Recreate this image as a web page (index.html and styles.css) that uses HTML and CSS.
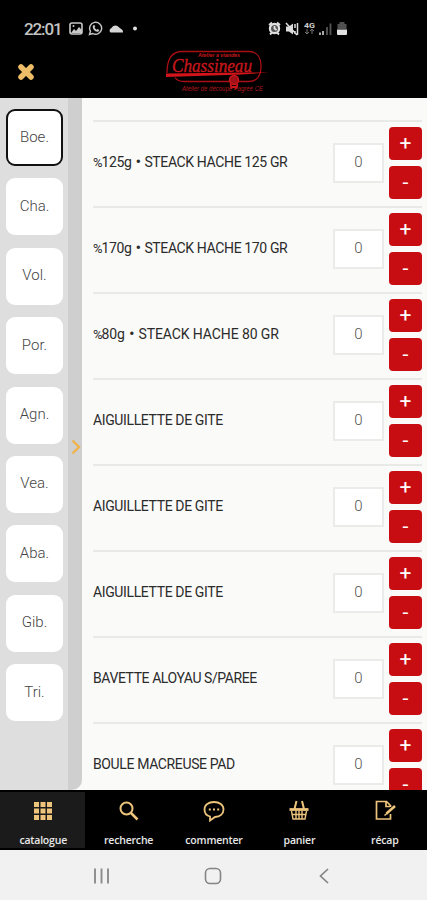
FILE: index.html
```html
<!DOCTYPE html>
<html lang="fr">
  <head>
    <meta charset="UTF-8" />
    <meta name="viewport" content="width=device-width, initial-scale=1.0" />
    <title>Catalogue</title>
    <link rel="stylesheet" href="styles.css">
  </head>
  <body>
    <div class="app">
      <!-- Status bar -->
      <div class="status">
        <span class="time">22:01</span>
        <svg class="status-left" width="72" height="16" viewBox="0 0 72 16">
          <rect x="1" y="2" width="12" height="11" rx="2" fill="none" stroke="#c8c8c8" stroke-width="1.6"/>
          <path d="M2 12l3-4 2 2 3-4 3 3v3z" fill="#c8c8c8"/>
          <circle cx="4.5" cy="5" r="1" fill="#c8c8c8"/>
          <path d="M20.5 13.5l1-3.2a6 6 0 1 1 2.3 2.2z" fill="none" stroke="#c8c8c8" stroke-width="1.4"/>
          <path d="M24 4.500c-1.200 3.500 2.500 7 5.500 6l.8-1.600-1.800-1-1 .8-2-2 .8-1-1-1.800z" fill="#c8c8c8"/>
          <path d="M41.500 11.500a2.600 2.600 0 0 1 1-4.500 4.500 4.500 0 0 1 7.500-.8c1 1.500 4.500 1.800 4 5.300z" fill="#d6d6d6"/>
          <circle cx="66" cy="7.500" r="2" fill="#e0e0e0"/>
        </svg>
        <svg class="status-right" width="80" height="16" viewBox="0 0 80 16">
          <circle cx="6.500" cy="7.500" r="4.600" fill="#555" stroke="#e0e0e0" stroke-width="2.200"/>
          <path d="M1 4l3-2.500M12 4L9 1.500M2 13.500l2-2M11 13.500l-2-2M6.500 5v2.500l2 1.500" fill="none" stroke="#e0e0e0" stroke-width="1.800"/>
          <path d="M18 5.500h3l4-3v11l-4-3h-3z" fill="#dcdcdc"/>
          <path d="M18 2l11 12M27 3v4M29.500 2v12M27 10v3" fill="none" stroke="#dcdcdc" stroke-width="1.500"/>
          <text class="network" x="36" y="7" textLength="11" lengthAdjust="spacingAndGlyphs">4G</text>
          <path d="M39 8v5m-2-2l2 2 2-2M44 13V8m-2 2l2-2 2 2" fill="none" stroke="#777" stroke-width="1"/>
          <path d="M52 14v-2.500M55 14v-4" stroke="#bbb" stroke-width="1.800"/>
          <path d="M59 14V6M62.500 14V2.500" stroke="#555" stroke-width="1.800"/>
          <path d="M71.500 1h5v2h2v5h-9V3h2z" fill="#505050"/>
          <path d="M69 8.500h10V13a1 1 0 0 1-1 1h-8a1 1 0 0 1-1-1z" fill="#e2e2e2"/>
        </svg>
      </div>

      <!-- Header -->
      <header>
        <svg class="close" width="18" height="18" viewBox="0 0 18 18">
          <path d="M4 4l10 10M14 4L4 14" stroke="#edbd68" stroke-width="5.500" stroke-linecap="round"/>
        </svg>
        <svg class="logo" width="120" height="48" viewBox="0 0 120 48">
          <path d="M3 24C3 10 8 2.500 18 2.500h67c8 0 12 6 12 15s-4 15-12 15H20c-4 0-7-1-9-4" fill="none" stroke="#a80f14" stroke-width="1.300"/>
          <text class="logo-top" x="34" y="8" textLength="42" lengthAdjust="spacingAndGlyphs">Atelier a viandes</text>
          <text class="logo-name" x="8" y="23" textLength="80" lengthAdjust="spacingAndGlyphs">Chassineau</text>
          <path d="M2 24.500l77-1h26l-27 2-76 2.500z" fill="#d4141a"/>
          <circle cx="70" cy="31" r="4.500" fill="#a01217" stroke="#cc171c" stroke-width="1.500"/>
          <path d="M66.500 35l1 5M73.500 35l-1 5M67 38h6" fill="none" stroke="#cc171c" stroke-width="1.800"/>
          <text class="logo-sub" x="18" y="41.500" textLength="81" lengthAdjust="spacingAndGlyphs">Atelier de découpe • agréé CE</text>
        </svg>
      </header>

      <main>
        <!-- Families -->
        <aside>
          <div class="families">
            <div class="family selected">Boe.</div>
            <div class="family">Cha.</div>
            <div class="family">Vol.</div>
            <div class="family">Por.</div>
            <div class="family">Agn.</div>
            <div class="family">Vea.</div>
            <div class="family">Aba.</div>
            <div class="family">Gib.</div>
            <div class="family">Tri.</div>
          </div>
          <div class="handle">
            <svg width="10" height="16" viewBox="0 0 10 16">
              <path d="M1.500 1.500L8 8l-6.500 6.500" fill="none" stroke="#f0b34c" stroke-width="2.400"/>
            </svg>
          </div>
        </aside>

        <!-- Products -->
        <div class="products">
          <div class="product">
            <div class="name"><span class="percent">%</span>125g <b>•</b> STEACK HACHE 125 GR</div>
            <div class="qty">0</div>
            <div class="buttons"><button>+</button><button>-</button></div>
          </div>
          <div class="product">
            <div class="name"><span class="percent">%</span>170g <b>•</b> STEACK HACHE 170 GR</div>
            <div class="qty">0</div>
            <div class="buttons"><button>+</button><button>-</button></div>
          </div>
          <div class="product">
            <div class="name wide"><span class="percent">%</span>80g <b>•</b> STEACK HACHE 80 GR</div>
            <div class="qty">0</div>
            <div class="buttons"><button>+</button><button>-</button></div>
          </div>
          <div class="product">
            <div class="name">AIGUILLETTE DE GITE</div>
            <div class="qty">0</div>
            <div class="buttons"><button>+</button><button>-</button></div>
          </div>
          <div class="product">
            <div class="name">AIGUILLETTE DE GITE</div>
            <div class="qty">0</div>
            <div class="buttons"><button>+</button><button>-</button></div>
          </div>
          <div class="product">
            <div class="name">AIGUILLETTE DE GITE</div>
            <div class="qty">0</div>
            <div class="buttons"><button>+</button><button>-</button></div>
          </div>
          <div class="product">
            <div class="name tight">BAVETTE ALOYAU S/PAREE</div>
            <div class="qty">0</div>
            <div class="buttons"><button>+</button><button>-</button></div>
          </div>
          <div class="product">
            <div class="name">BOULE MACREUSE PAD</div>
            <div class="qty">0</div>
            <div class="buttons"><button>+</button><button>-</button></div>
          </div>
        </div>
      </main>

      <!-- Tabs -->
      <nav class="tabs">
        <div class="tab active">
          <svg width="24" height="24" viewBox="0 0 24 24" fill="#edc47c">
            <path d="M3 3h5v5H3zM9.500 3h5v5h-5zM16 3h5v5h-5zM3 9.500h5v5H3zM9.500 9.500h5v5h-5zM16 9.500h5v5h-5zM3 16h5v5H3zM9.500 16h5v5h-5zM16 16h5v5h-5z"/>
          </svg>
          <span>catalogue</span>
        </div>
        <div class="tab">
          <svg width="24" height="24" viewBox="0 0 24 24" fill="none" stroke="#edc47c" stroke-width="2">
            <circle cx="9.500" cy="9.500" r="6"/>
            <path d="M14 14l6.500 6.500" stroke-width="2.500"/>
          </svg>
          <span>recherche</span>
        </div>
        <div class="tab">
          <svg width="24" height="24" viewBox="0 0 24 24" fill="none" stroke="#edc47c" stroke-width="1.800">
            <path d="M8 17.500C4 16.500 2.500 13.500 2.500 10.500 2.500 6 6.500 3 12 3s9.500 3 9.500 7.500S18 17.800 13 18l-5 3.500z"/>
            <path d="M6.800 10.500h2M11 10.500h2M15.200 10.500h2" stroke-width="2.200"/>
          </svg>
          <span>commenter</span>
        </div>
        <div class="tab">
          <svg width="24" height="24" viewBox="0 0 24 24" fill="none" stroke="#edc47c">
            <path d="M9.500 2L7.500 10M15 2l2 8" stroke-width="2"/>
            <path d="M2.500 10.500h19" stroke-width="2.800"/>
            <path d="M4.500 12l1.500 8h12l1.500-8M5 15.500h14M9 12v8M12 12v8M15 12v8" stroke-width="1.400"/>
          </svg>
          <span>panier</span>
        </div>
        <div class="tab">
          <svg width="24" height="24" viewBox="0 0 24 24" fill="none" stroke="#edc47c" stroke-width="1.700">
            <path d="M17.500 8V6.500L13.500 2.500H3.500V20h14v-5M13 3v4.500h4"/>
            <path d="M13.500 14.500l8.500-7.500" stroke-width="2.600"/>
            <path d="M11.500 16.500l3-2.500" stroke-width="1.600"/>
          </svg>
          <span>récap</span>
        </div>
      </nav>

      <!-- Android navigation -->
      <div class="android">
        <svg width="20" height="20" viewBox="0 0 20 20" fill="none" stroke="#8b8b8b" stroke-width="1.900">
          <path d="M3 2.500v15M9.500 2.500v15M16 2.500v15"/>
        </svg>
        <svg width="20" height="20" viewBox="0 0 20 20" fill="none" stroke="#858585" stroke-width="1.600">
          <rect x="1.500" y="2.500" width="15" height="15" rx="4.500"/>
        </svg>
        <svg width="20" height="20" viewBox="0 0 20 20" fill="none" stroke="#858585" stroke-width="1.700">
          <path d="M13 3L5.500 10l7.500 7"/>
        </svg>
      </div>
    </div>
  </body>
</html>
```
FILE: styles.css
```css
* {
  box-sizing: border-box;
}

body {
  margin: 0;
  font-family: Roboto, "Liberation Sans", sans-serif;
  background-color: #000;
}

.app {
  display: flex;
  flex-direction: column;
  height: 900px;
  overflow: hidden;
}

/* Status bar */
.status {
  display: flex;
  align-items: center;
  height: 47px;
  padding: 11px 79px 0 24px;
}

.time {
  width: 45px;
  font-size: 17px;
  font-weight: 500;
  letter-spacing: -1.1px;
  color: #c4c4c4;
}

.status-right {
  margin-left: auto;
}

.network {
  font-size: 8px;
  font-weight: bold;
  fill: #ccc;
}

/* Header */
header {
  display: flex;
  height: 51px;
  padding-left: 17px;
}

.close {
  margin-top: 16px;
}

.logo {
  margin: 2px 0 0 129px;
}

.logo text {
  font-family: "Liberation Serif", serif;
  font-style: italic;
  fill: #c5171c;
}

.logo .logo-name {
  font-size: 19px;
  stroke: #c5171c;
  stroke-width: 0.4px;
}

.logo .logo-top {
  font-family: "Liberation Sans", sans-serif;
  font-size: 4.5px;
  font-weight: bold;
}

.logo .logo-sub {
  font-family: "Liberation Sans", sans-serif;
  font-size: 7px;
  fill: #b0181d;
}

main {
  display: flex;
  height: 692px;
  background-color: #fafaf8;
  overflow: hidden;
}

/* Families */
aside {
  display: flex;
  width: 82px;
  border-bottom-right-radius: 10px;
  background-color: #cfcfcf;
  overflow: hidden;
}

.families {
  display: flex;
  flex-direction: column;
  gap: 12.4px;
  width: 68px;
  padding: 11px 0 0 6px;
  background-color: #dedede;
}

.family {
  display: flex;
  flex-shrink: 0;
  align-items: center;
  justify-content: center;
  width: 57px;
  height: 57px;
  padding-bottom: 2px;
  border-radius: 9px;
  background-color: #fff;
  font-size: 15px;
  font-weight: 300;
  color: #444;
}

.family.selected {
  border: 2px solid #111;
}

.handle {
  display: flex;
  align-items: center;
  padding: 6px 0 0 3px;
}

/* Products */
.products {
  flex: 1;
  padding: 22px 5px 0 11px;
}

.product {
  display: flex;
  align-items: center;
  height: 86px;
  padding-bottom: 3px;
  border-top: 2px solid #e9e9e8;
}

.name {
  flex: 1;
  padding-bottom: 2px;
  font-size: 14px;
  letter-spacing: -0.37px;
  white-space: nowrap;
  color: #2b2b2b;
}

.name.wide {
  letter-spacing: -0.1px;
}

.name.tight {
  letter-spacing: -0.42px;
}

.name b {
  margin: 0 1px;
}

.percent {
  font-size: 13px;
  letter-spacing: -1px;
}

.qty {
  display: flex;
  align-items: center;
  justify-content: center;
  width: 51px;
  height: 40px;
  margin-right: 5px;
  padding-bottom: 2px;
  border: 2px solid #ebebea;
  background-color: #fff;
  font-size: 15px;
  font-weight: 300;
  color: #555;
}

.buttons {
  display: flex;
  flex-direction: column;
  gap: 6px;
}

.buttons button {
  width: 33px;
  height: 33px;
  padding: 0;
  border: none;
  border-radius: 4px;
  background-color: #c80d12;
  font-family: inherit;
  font-size: 21px;
  line-height: 33px;
  color: #fff;
}

/* Tabs */
.tabs {
  display: flex;
  height: 60px;
  padding: 2px 0;
  background-color: #000;
}

.tab {
  display: flex;
  flex: 1;
  flex-direction: column;
  align-items: center;
  padding: 7px 0 0 1px;
}

.tab.active {
  background-color: #1b1b1b;
}

.tab span {
  margin-top: 10px;
  font-family: "Open Sans", sans-serif;
  font-size: 10.5px;
  font-weight: 600;
  line-height: 14px;
  letter-spacing: -0.2px;
  color: #e8e8e8;
}

/* Android navigation */
.android {
  display: flex;
  flex: 1;
  align-items: center;
  justify-content: center;
  gap: 91.5px;
  padding-top: 2px;
  background-color: #f1f1f1;
}
```
